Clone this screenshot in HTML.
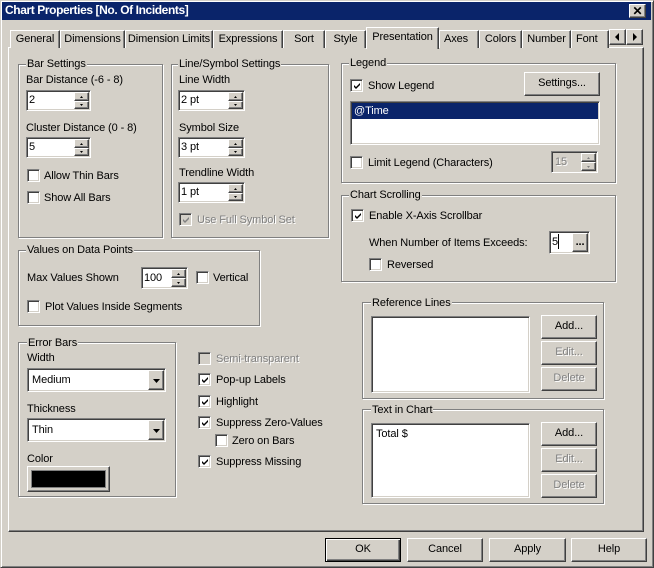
<!DOCTYPE html>
<html><head><meta charset="utf-8">
<style>
*{box-sizing:border-box;margin:0;padding:0}
body{width:654px;height:568px;background:#d4d0c8;font-family:"Liberation Sans",sans-serif;font-size:11px;color:#000;position:relative;overflow:hidden}
.a{position:absolute}
.t{position:absolute;white-space:nowrap;line-height:14px;font-size:11px;letter-spacing:-0.1px}
.dis{color:#808080;text-shadow:1px 1px 0 #fff}
.grp{position:absolute;border:1px solid #808080;box-shadow:1px 1px 0 #fff,inset 1px 1px 0 #fff}
.gt{position:absolute;background:#d4d0c8;padding:0 1px;white-space:nowrap;line-height:14px;letter-spacing:-0.1px;font-size:11px}
.sunk{position:absolute;background:#fff;border-top:1px solid #808080;border-left:1px solid #808080;border-right:1px solid #fff;border-bottom:1px solid #fff;box-shadow:inset 1px 1px 0 #404040,inset -1px -1px 0 #d4d0c8}
.btn{position:absolute;background:#d4d0c8;border-top:1px solid #fff;border-left:1px solid #fff;border-right:1px solid #404040;border-bottom:1px solid #404040;box-shadow:inset -1px -1px 0 #808080;text-align:center;letter-spacing:-0.1px;white-space:nowrap;font-size:11px;overflow:hidden}
.cb{position:absolute;width:13px;height:13px;background:#fff;border-top:1px solid #808080;border-left:1px solid #808080;border-right:1px solid #fff;border-bottom:1px solid #fff;box-shadow:inset 1px 1px 0 #404040,inset -1px -1px 0 #d4d0c8}
.cb svg{position:absolute;left:2px;top:2px}
.cb.d{background:#d4d0c8}
</style></head><body>
<div class="a" style="left:0;top:0;width:654px;height:568px;border-left:1px solid #d4d0c8;border-top:1px solid #d4d0c8;border-right:1px solid #404040;border-bottom:1px solid #404040;box-shadow:inset 1px 1px 0 #fff,inset -1px -1px 0 #808080"></div>
<div class="a" style="left:2px;top:2px;width:649px;height:18px;background:#0a246a"></div>
<div class="t" style="left:5px;top:3px;color:#fff;font-weight:bold;font-size:12px;letter-spacing:-0.4px">Chart Properties [No. Of Incidents]</div>
<div class="btn" style="left:629px;top:4px;width:17px;height:14px;line-height:12px;font-weight:bold;font-size:12px">✕</div>

<div class="a" style="left:8px;top:47px;width:636px;height:485px;border-top:1px solid #fff;border-left:1px solid #fff;border-right:1px solid #404040;border-bottom:1px solid #404040;box-shadow:inset -1px -1px 0 #808080"></div>

<div class="btn" style="left:10px;top:30px;width:50px;height:18px;border-bottom:none;box-shadow:inset -1px 0 0 #808080;line-height:16px">General</div>
<div class="btn" style="left:60px;top:30px;width:65px;height:18px;border-bottom:none;box-shadow:inset -1px 0 0 #808080;line-height:16px">Dimensions</div>
<div class="btn" style="left:125px;top:30px;width:88px;height:18px;border-bottom:none;box-shadow:inset -1px 0 0 #808080;line-height:16px">Dimension Limits</div>
<div class="btn" style="left:213px;top:30px;width:70px;height:18px;border-bottom:none;box-shadow:inset -1px 0 0 #808080;line-height:16px">Expressions</div>
<div class="btn" style="left:283px;top:30px;width:42px;height:18px;border-bottom:none;box-shadow:inset -1px 0 0 #808080;line-height:16px">Sort</div>
<div class="btn" style="left:325px;top:30px;width:41px;height:18px;border-bottom:none;box-shadow:inset -1px 0 0 #808080;line-height:16px">Style</div>
<div class="btn" style="left:366px;top:27px;width:73px;height:22px;border-bottom:none;box-shadow:inset -1px 0 0 #808080;line-height:18px;z-index:2">Presentation</div>
<div class="btn" style="left:439px;top:30px;width:40px;height:18px;border-bottom:none;box-shadow:inset -1px 0 0 #808080;line-height:16px;text-align:left;padding-left:4px">Axes</div>
<div class="btn" style="left:479px;top:30px;width:43px;height:18px;border-bottom:none;box-shadow:inset -1px 0 0 #808080;line-height:16px">Colors</div>
<div class="btn" style="left:522px;top:30px;width:49px;height:18px;border-bottom:none;box-shadow:inset -1px 0 0 #808080;line-height:16px">Number</div>
<div class="btn" style="left:571px;top:30px;width:38px;height:18px;border-bottom:none;box-shadow:inset -1px 0 0 #808080;line-height:16px;text-align:left;padding-left:4px">Font</div>
<div class="btn" style="left:609px;top:29px;width:17px;height:16px"><svg width="15" height="14" class="a" style="left:0;top:0"><path d="M5 7L9 3V11Z" fill="#000"/></svg></div>
<div class="btn" style="left:626px;top:29px;width:17px;height:16px"><svg width="15" height="14" class="a" style="left:0;top:0"><path d="M6 3L10 7L6 11Z" fill="#000"/></svg></div>

<div class="grp" style="left:18px;top:64px;width:145px;height:174px"></div>
<div class="gt" style="left:26px;top:57px">Bar Settings</div>
<div class="t" style="left:26px;top:73px">Bar Distance (-6 - 8)</div>
<div class="sunk" style="left:26px;top:90px;width:65px;height:21px"></div><div class="t" style="left:29px;top:93px">2</div>
<div class="t" style="left:26px;top:121px">Cluster Distance (0 - 8)</div>
<div class="sunk" style="left:26px;top:137px;width:65px;height:21px"></div><div class="t" style="left:29px;top:140px">5</div>
<div class="cb" style="left:27px;top:169px"></div><div class="t" style="left:44px;top:169px">Allow Thin Bars</div>
<div class="cb" style="left:27px;top:191px"></div><div class="t" style="left:44px;top:191px">Show All Bars</div>

<div class="grp" style="left:171px;top:64px;width:158px;height:174px"></div>
<div class="gt" style="left:178px;top:57px">Line/Symbol Settings</div>
<div class="t" style="left:179px;top:73px">Line Width</div>
<div class="sunk" style="left:178px;top:90px;width:67px;height:21px"></div><div class="t" style="left:181px;top:93px">2 pt</div>
<div class="t" style="left:179px;top:121px">Symbol Size</div>
<div class="sunk" style="left:178px;top:137px;width:67px;height:21px"></div><div class="t" style="left:181px;top:140px">3 pt</div>
<div class="t" style="left:179px;top:166px">Trendline Width</div>
<div class="sunk" style="left:178px;top:182px;width:67px;height:21px"></div><div class="t" style="left:181px;top:185px">1 pt</div>
<div class="cb d" style="left:179px;top:213px"><svg width="9" height="9"><path d="M1 3L3 5L7 1V3L3 7L1 5Z" fill="#808080"/></svg></div><div class="t dis" style="left:197px;top:213px">Use Full Symbol Set</div>

<div class="grp" style="left:18px;top:250px;width:242px;height:76px"></div>
<div class="gt" style="left:26px;top:243px">Values on Data Points</div>
<div class="t" style="left:27px;top:271px">Max Values Shown</div>
<div class="sunk" style="left:141px;top:267px;width:47px;height:22px"></div><div class="t" style="left:144px;top:271px">100</div>
<div class="cb" style="left:196px;top:271px"></div><div class="t" style="left:213px;top:271px">Vertical</div>
<div class="cb" style="left:27px;top:300px"></div><div class="t" style="left:45px;top:300px">Plot Values Inside Segments</div>

<div class="grp" style="left:18px;top:342px;width:158px;height:155px"></div>
<div class="gt" style="left:27px;top:336px">Error Bars</div>
<div class="t" style="left:27px;top:351px">Width</div>
<div class="sunk" style="left:27px;top:368px;width:139px;height:24px"></div><div class="t" style="left:32px;top:373px">Medium</div>
<div class="t" style="left:27px;top:402px">Thickness</div>
<div class="sunk" style="left:27px;top:418px;width:139px;height:24px"></div><div class="t" style="left:32px;top:423px">Thin</div>
<div class="t" style="left:27px;top:452px">Color</div>
<div class="btn" style="left:27px;top:466px;width:83px;height:26px"><div class="a" style="left:3px;top:3px;width:75px;height:18px;background:#000;border:1px solid #808080"></div></div>

<div class="cb d" style="left:198px;top:352px"></div><div class="t dis" style="left:216px;top:352px">Semi-transparent</div>
<div class="cb" style="left:198px;top:373px"><svg width="9" height="9"><path d="M1 3L3 5L7 1V3L3 7L1 5Z" fill="#000"/></svg></div><div class="t" style="left:216px;top:373px">Pop-up Labels</div>
<div class="cb" style="left:198px;top:395px"><svg width="9" height="9"><path d="M1 3L3 5L7 1V3L3 7L1 5Z" fill="#000"/></svg></div><div class="t" style="left:216px;top:395px">Highlight</div>
<div class="cb" style="left:198px;top:416px"><svg width="9" height="9"><path d="M1 3L3 5L7 1V3L3 7L1 5Z" fill="#000"/></svg></div><div class="t" style="left:216px;top:416px">Suppress Zero-Values</div>
<div class="cb" style="left:215px;top:434px"></div><div class="t" style="left:232px;top:434px">Zero on Bars</div>
<div class="cb" style="left:198px;top:455px"><svg width="9" height="9"><path d="M1 3L3 5L7 1V3L3 7L1 5Z" fill="#000"/></svg></div><div class="t" style="left:216px;top:455px">Suppress Missing</div>

<div class="grp" style="left:341px;top:63px;width:275px;height:120px"></div>
<div class="gt" style="left:349px;top:56px">Legend</div>
<div class="cb" style="left:350px;top:79px"><svg width="9" height="9"><path d="M1 3L3 5L7 1V3L3 7L1 5Z" fill="#000"/></svg></div><div class="t" style="left:368px;top:79px">Show Legend</div>
<div class="btn" style="left:524px;top:72px;width:76px;height:24px;line-height:21px">Settings...</div>
<div class="sunk" style="left:350px;top:101px;width:250px;height:44px"></div>
<div class="a" style="left:352px;top:103px;width:246px;height:16px;background:#0a246a"></div>
<div class="t" style="left:354px;top:104px;color:#fff">@Time</div>
<div class="cb" style="left:350px;top:156px"></div><div class="t" style="left:368px;top:156px">Limit Legend (Characters)</div>
<div class="sunk" style="left:551px;top:151px;width:47px;height:22px;background:#d4d0c8"></div><div class="t dis" style="left:555px;top:155px">15</div>

<div class="grp" style="left:341px;top:195px;width:275px;height:87px"></div>
<div class="gt" style="left:349px;top:188px">Chart Scrolling</div>
<div class="cb" style="left:351px;top:209px"><svg width="9" height="9"><path d="M1 3L3 5L7 1V3L3 7L1 5Z" fill="#000"/></svg></div><div class="t" style="left:369px;top:209px">Enable X-Axis Scrollbar</div>
<div class="t" style="left:369px;top:236px">When Number of Items Exceeds:</div>
<div class="sunk" style="left:549px;top:231px;width:41px;height:23px"></div><div class="t" style="left:552px;top:235px">5</div>
<div class="a" style="left:558px;top:234px;width:1px;height:15px;background:#000"></div>
<div class="btn" style="left:572px;top:233px;width:16px;height:19px;line-height:16px;font-weight:bold">...</div>
<div class="cb" style="left:369px;top:258px"></div><div class="t" style="left:387px;top:258px">Reversed</div>

<div class="grp" style="left:362px;top:302px;width:242px;height:97px"></div>
<div class="gt" style="left:371px;top:296px">Reference Lines</div>
<div class="sunk" style="left:371px;top:316px;width:159px;height:77px"></div>
<div class="btn" style="left:541px;top:315px;width:56px;height:24px;line-height:21px">Add...</div>
<div class="btn dis" style="left:541px;top:341px;width:56px;height:24px;line-height:21px">Edit...</div>
<div class="btn dis" style="left:541px;top:367px;width:56px;height:24px;line-height:21px">Delete</div>

<div class="grp" style="left:362px;top:409px;width:242px;height:95px"></div>
<div class="gt" style="left:371px;top:403px">Text in Chart</div>
<div class="sunk" style="left:371px;top:423px;width:159px;height:75px"></div>
<div class="t" style="left:376px;top:427px">Total $</div>
<div class="btn" style="left:541px;top:422px;width:56px;height:24px;line-height:21px">Add...</div>
<div class="btn dis" style="left:541px;top:448px;width:56px;height:24px;line-height:21px">Edit...</div>
<div class="btn dis" style="left:541px;top:474px;width:56px;height:24px;line-height:21px">Delete</div>

<div class="btn" style="left:74px;top:92px;width:15px;height:9px"></div><div class="btn" style="left:74px;top:101px;width:15px;height:8px"></div>
<div class="btn" style="left:74px;top:139px;width:15px;height:9px"></div><div class="btn" style="left:74px;top:148px;width:15px;height:8px"></div>
<div class="btn" style="left:228px;top:92px;width:15px;height:9px"></div><div class="btn" style="left:228px;top:101px;width:15px;height:8px"></div>
<div class="btn" style="left:228px;top:139px;width:15px;height:9px"></div><div class="btn" style="left:228px;top:148px;width:15px;height:8px"></div>
<div class="btn" style="left:228px;top:184px;width:15px;height:9px"></div><div class="btn" style="left:228px;top:193px;width:15px;height:8px"></div>
<div class="btn" style="left:171px;top:269px;width:15px;height:9px"></div><div class="btn" style="left:171px;top:278px;width:15px;height:9px"></div>
<div class="btn" style="left:581px;top:153px;width:15px;height:9px"></div><div class="btn" style="left:581px;top:162px;width:15px;height:9px"></div>
<svg class="a" style="left:0;top:0" width="654" height="568">
<g fill="#000">
<path d="M80 98h3l-1.5-2z M80 104h3l-1.5 2z"/>
<path d="M80 145h3l-1.5-2z M80 151h3l-1.5 2z"/>
<path d="M234 98h3l-1.5-2z M234 104h3l-1.5 2z"/>
<path d="M234 145h3l-1.5-2z M234 151h3l-1.5 2z"/>
<path d="M234 190h3l-1.5-2z M234 196h3l-1.5 2z"/>
<path d="M177 275h3l-1.5-2z M177 282h3l-1.5 2z"/>
</g>
<g fill="#808080"><path d="M587 159h3l-1.5-2z M587 166h3l-1.5 2z"/></g>
</svg>
<div class="btn" style="left:148px;top:370px;width:16px;height:20px"><svg width="14" height="18" class="a" style="left:0;top:0"><path d="M4 8h7l-3.5 4z" fill="#000"/></svg></div>
<div class="btn" style="left:148px;top:420px;width:16px;height:20px"><svg width="14" height="18" class="a" style="left:0;top:0"><path d="M4 8h7l-3.5 4z" fill="#000"/></svg></div>

<div class="btn" style="left:325px;top:538px;width:76px;height:24px;line-height:21px;border:1px solid #000;box-shadow:inset 1px 1px 0 #fff,inset -1px -1px 0 #404040,inset -2px -2px 0 #808080">OK</div>
<div class="btn" style="left:407px;top:538px;width:76px;height:24px;line-height:21px">Cancel</div>
<div class="btn" style="left:489px;top:538px;width:77px;height:24px;line-height:21px">Apply</div>
<div class="btn" style="left:571px;top:538px;width:76px;height:24px;line-height:21px">Help</div>
</body></html>
